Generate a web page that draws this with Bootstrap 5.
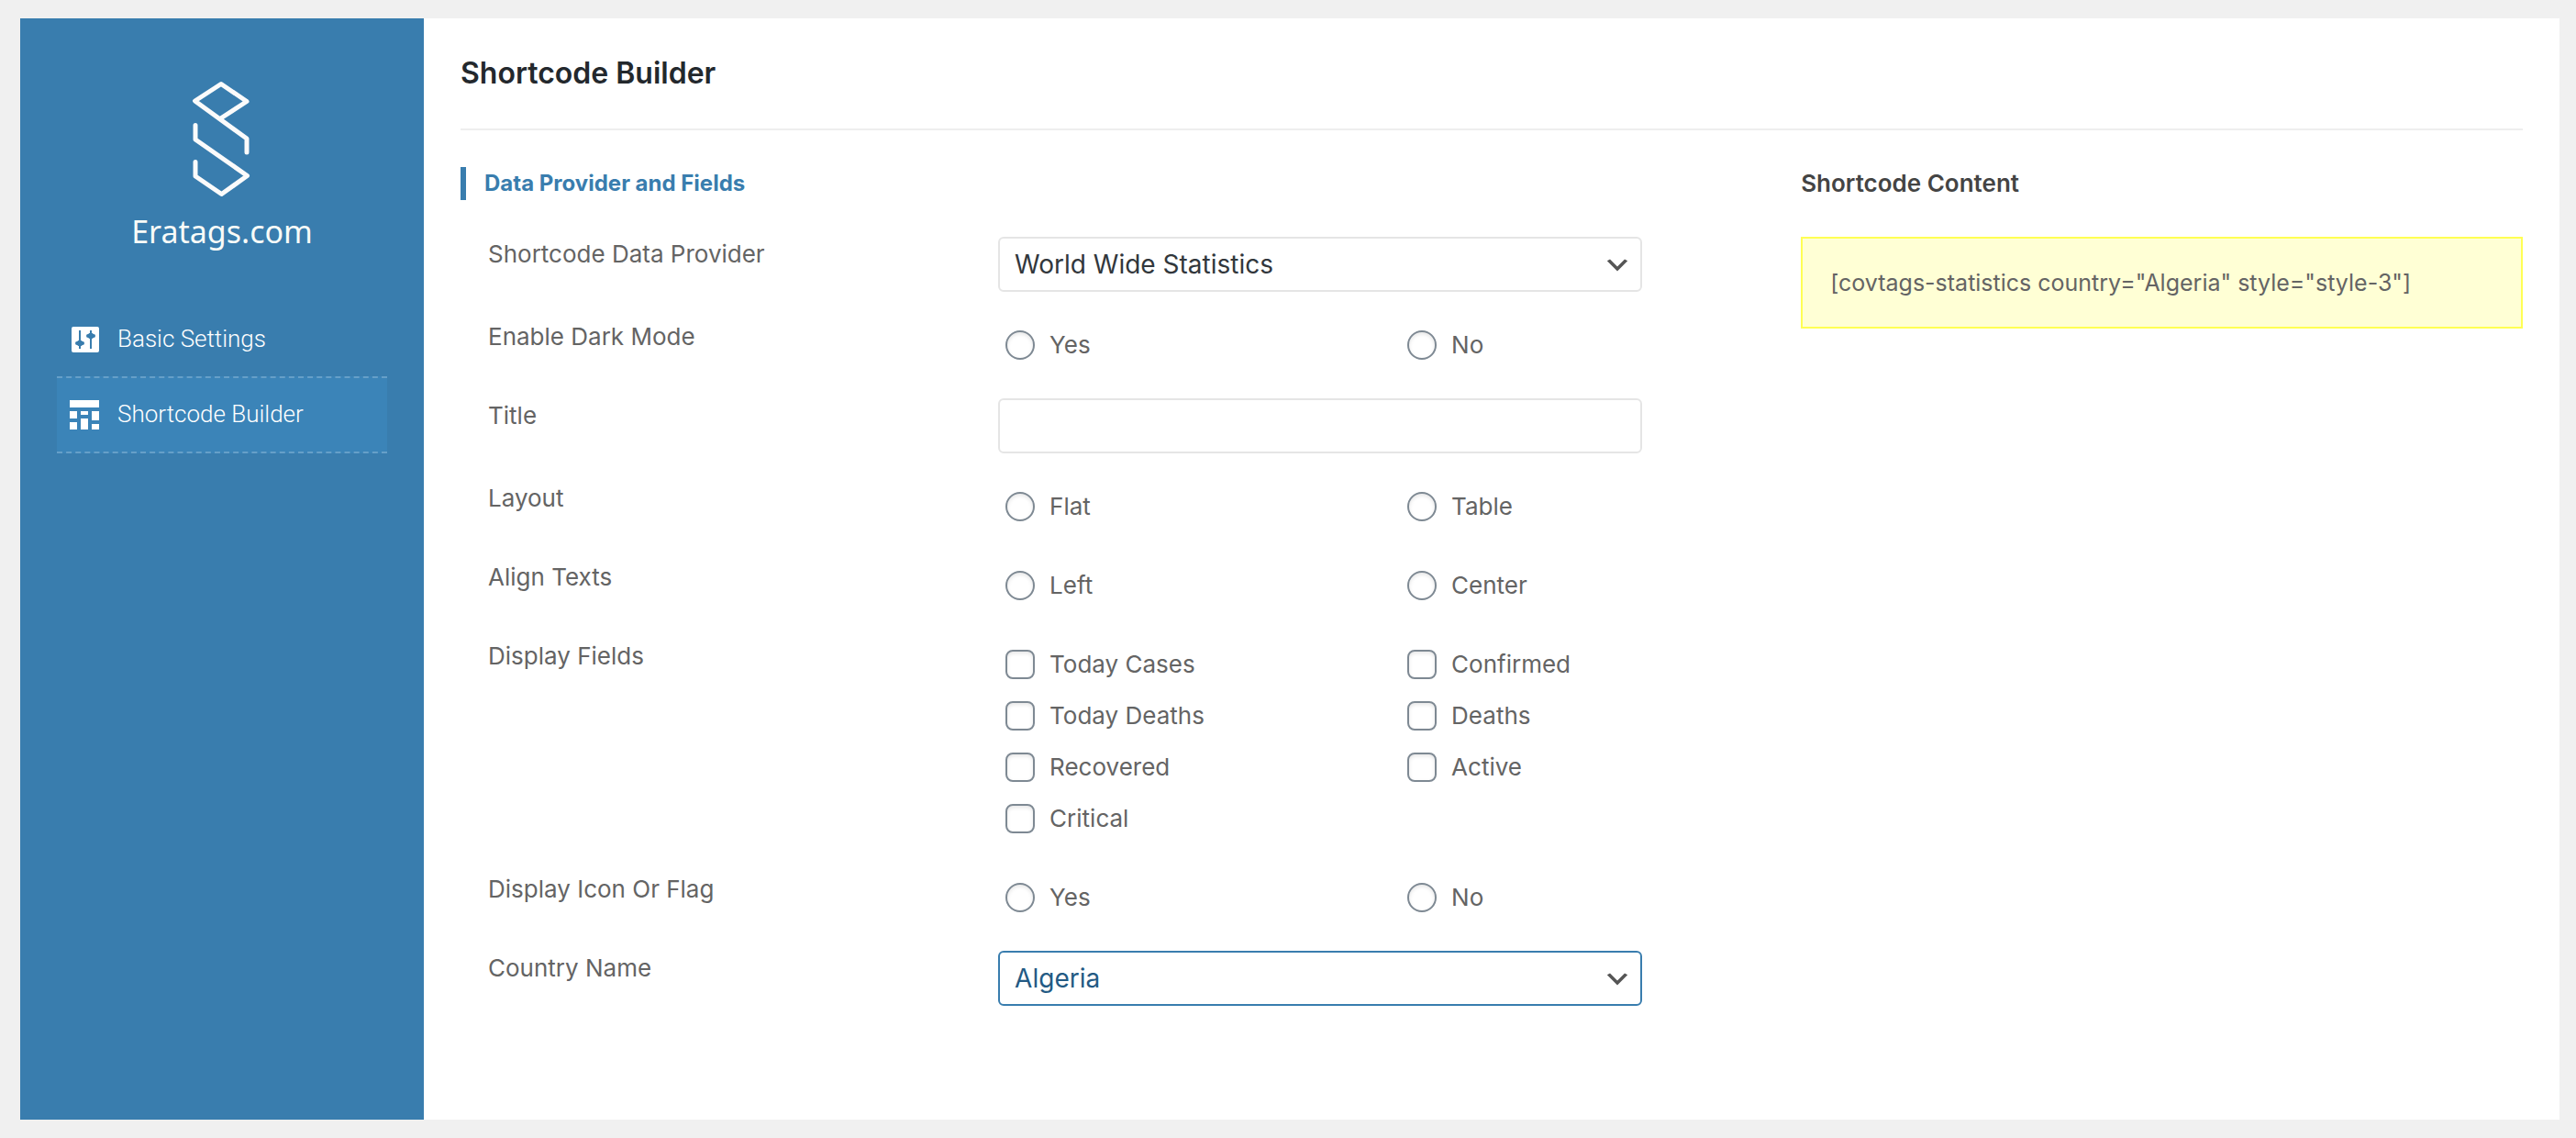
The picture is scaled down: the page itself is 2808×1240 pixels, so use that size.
<!DOCTYPE html>
<html lang="en">
<head>
<meta charset="utf-8">
<meta name="viewport" content="width=device-width, initial-scale=1">
<title>Shortcode Builder</title>
<link href="https://cdn.jsdelivr.net/npm/bootstrap@5.3.0/dist/css/bootstrap.min.css" rel="stylesheet">
<style>
  body { background: #f0f0f0; color: #646464; font-family: Inter, "Liberation Sans", sans-serif; font-size: 26px; line-height: 36px; }
  .app-shell { margin: 20px 18px 20px 22px; min-height: calc(100vh - 40px); background: #fff; }
  .side-panel { flex: 0 0 440px; background: #397dae; padding: 66px 40px 40px; color: #fff; }
  .brand-name { font-family: "Noto Sans", sans-serif; font-size: 34px; line-height: 48px; margin-top: 10px; color: #f8fbf8; }
  .side-menu { margin-top: 54px; font-family: Roboto, sans-serif; font-weight: 300; font-size: 26px; line-height: 36px; }
  .side-link { color: #fff; height: 80px; padding: 0 14px; gap: 20px; text-decoration: none; }
  .side-link span { padding-bottom: 2px; }
  .side-link.current { height: 84px; background: #3b84b8; border-top: 2px dashed #669fc8; border-bottom: 2px dashed #669fc8; }
  .main-panel { padding: 40px; min-width: 0; }
  .page-title { font-size: 32px; line-height: 40px; font-weight: 600; color: #23282d; padding-bottom: 40px; margin-bottom: 40px; border-bottom: 2px solid #eee; }
  .builder-col { flex: 0 0 65%; }
  .section-title { font-size: 24px; line-height: 36px; font-weight: 700; color: #397dae; border-left: 6px solid #397dae; padding-left: 20px; margin-bottom: 40px; }
  .output-title { font-size: 26px; line-height: 36px; font-weight: 600; color: #444; margin-bottom: 40px; }
  .builder-form { padding: 0 173px 0 30px; gap: 30px; }
  .field-name { flex: 0 0 44.2%; line-height: 38px; font-size: 26px; font-weight: 400; }
  .field-box, .field-box:focus { height: 60px; border: 2px solid #e5e5e5; border-radius: 6px; padding: 0 48px 0 16px; font-size: 28px; line-height: 56px; color: #32373c; background-color: #fff; box-shadow: none; }
  select.field-box { background-image: url("data:image/svg+xml,%3Csvg xmlns='http://www.w3.org/2000/svg' viewBox='0 0 20 20'%3E%3Cpath d='M5 6l5 5 5-5 2 1-7 7-7-7 2-1z' fill='%23555'/%3E%3C/svg%3E"); background-size: 32px 32px; background-position: right 9px top 55%; }
  .field-box.active-box { border-color: #397dae; color: #235a84; }
  .option-grid { display: grid; grid-template-columns: 438px 1fr; padding-left: 8px; }
  .option-item { height: 56px; gap: 16px; }
  .option-item .form-check-input { width: 32px; height: 32px; margin: 0; border: 2px solid #7e8993; box-shadow: inset 0 2px 4px rgba(0,0,0,.1); }
  .option-item .form-check-input[type=checkbox] { border-radius: 8px; }
  .code-output { background: #ffffd5; border: 2px solid #ffff54; padding: 30px; font-size: 25px; }
</style>
</head>
<body>
<div class="app-shell d-flex">
  <aside class="side-panel">
    <div class="d-flex flex-column align-items-center">
      <svg width="66" height="132" viewBox="209 86 66 132" fill="none" stroke="#fbfbfb" stroke-width="5" stroke-linecap="round" stroke-linejoin="round" aria-hidden="true">
        <path d="M240.500 129L269 110.500L241 91.500L212.500 110L269 151V166"/>
        <path d="M213 136.500V152L269.500 191.500L241.500 211.500L213 192V176.500"/>
      </svg>
      <div class="brand-name">Eratags.com</div>
    </div>
    <nav class="side-menu d-flex flex-column">
      <a href="#" class="side-link d-flex align-items-center">
        <svg width="32" height="32" viewBox="0 0 32 32" aria-hidden="true">
          <rect x="2" y="2" width="30" height="28" rx="2" fill="#fff"/>
          <g fill="#397dae"><rect x="10" y="6" width="2" height="20"/><rect x="6" y="18" width="10" height="4" rx="2"/><rect x="8.500" y="17" width="5" height="6" rx="1"/><rect x="22" y="6" width="2" height="20"/><rect x="18" y="10" width="10" height="4" rx="2"/><rect x="20.500" y="9" width="5" height="6" rx="1"/></g>
        </svg>
        <span>Basic Settings</span>
      </a>
      <a href="#" class="side-link current d-flex align-items-center" aria-current="page">
        <svg width="32" height="32" viewBox="0 0 32 32" fill="#fff" aria-hidden="true">
          <path d="M0 0h32v8H0zM0 12h8v8H0zM12 12h8v4h-8zM24 12h8v10h-8zM0 24h8v8H0zM12 20h8v12h-8zM24 26h8v6h-8z"/>
        </svg>
        <span>Shortcode Builder</span>
      </a>
    </nav>
  </aside>

  <main class="main-panel flex-grow-1">
    <h1 class="page-title mt-0">Shortcode Builder</h1>
    <div class="d-flex">
      <section class="builder-col">
        <h2 class="section-title">Data Provider and Fields</h2>
        <form class="builder-form d-flex flex-column">
          <div class="d-flex">
            <label class="field-name" for="provider">Shortcode Data Provider</label>
            <select class="form-select field-box" id="provider"><option selected>World Wide Statistics</option></select>
          </div>
          <div class="d-flex" role="radiogroup" aria-labelledby="dark-name">
            <div class="field-name" id="dark-name">Enable Dark Mode</div>
            <div class="option-grid flex-grow-1">
              <div class="option-item d-flex align-items-center"><input class="form-check-input" type="radio" name="dark" id="dark-yes"><label for="dark-yes">Yes</label></div>
              <div class="option-item d-flex align-items-center"><input class="form-check-input" type="radio" name="dark" id="dark-no"><label for="dark-no">No</label></div>
            </div>
          </div>
          <div class="d-flex">
            <label class="field-name" for="title-box">Title</label>
            <input class="form-control field-box" type="text" id="title-box">
          </div>
          <div class="d-flex" role="radiogroup" aria-labelledby="layout-name">
            <div class="field-name" id="layout-name">Layout</div>
            <div class="option-grid flex-grow-1">
              <div class="option-item d-flex align-items-center"><input class="form-check-input" type="radio" name="layout" id="layout-flat"><label for="layout-flat">Flat</label></div>
              <div class="option-item d-flex align-items-center"><input class="form-check-input" type="radio" name="layout" id="layout-table"><label for="layout-table">Table</label></div>
            </div>
          </div>
          <div class="d-flex" role="radiogroup" aria-labelledby="align-name">
            <div class="field-name" id="align-name">Align Texts</div>
            <div class="option-grid flex-grow-1">
              <div class="option-item d-flex align-items-center"><input class="form-check-input" type="radio" name="align" id="align-left"><label for="align-left">Left</label></div>
              <div class="option-item d-flex align-items-center"><input class="form-check-input" type="radio" name="align" id="align-center"><label for="align-center">Center</label></div>
            </div>
          </div>
          <div class="d-flex" role="group" aria-labelledby="fields-name">
            <div class="field-name" id="fields-name">Display Fields</div>
            <div class="option-grid flex-grow-1">
              <div class="option-item d-flex align-items-center"><input class="form-check-input" type="checkbox" id="f-today-cases"><label for="f-today-cases">Today Cases</label></div>
              <div class="option-item d-flex align-items-center"><input class="form-check-input" type="checkbox" id="f-confirmed"><label for="f-confirmed">Confirmed</label></div>
              <div class="option-item d-flex align-items-center"><input class="form-check-input" type="checkbox" id="f-today-deaths"><label for="f-today-deaths">Today Deaths</label></div>
              <div class="option-item d-flex align-items-center"><input class="form-check-input" type="checkbox" id="f-deaths"><label for="f-deaths">Deaths</label></div>
              <div class="option-item d-flex align-items-center"><input class="form-check-input" type="checkbox" id="f-recovered"><label for="f-recovered">Recovered</label></div>
              <div class="option-item d-flex align-items-center"><input class="form-check-input" type="checkbox" id="f-active"><label for="f-active">Active</label></div>
              <div class="option-item d-flex align-items-center"><input class="form-check-input" type="checkbox" id="f-critical"><label for="f-critical">Critical</label></div>
            </div>
          </div>
          <div class="d-flex" role="radiogroup" aria-labelledby="icon-name">
            <div class="field-name" id="icon-name">Display Icon Or Flag</div>
            <div class="option-grid flex-grow-1">
              <div class="option-item d-flex align-items-center"><input class="form-check-input" type="radio" name="icon" id="icon-yes"><label for="icon-yes">Yes</label></div>
              <div class="option-item d-flex align-items-center"><input class="form-check-input" type="radio" name="icon" id="icon-no"><label for="icon-no">No</label></div>
            </div>
          </div>
          <div class="d-flex">
            <label class="field-name" for="country">Country Name</label>
            <select class="form-select field-box active-box" id="country"><option selected>Algeria</option></select>
          </div>
        </form>
      </section>
      <section class="flex-grow-1">
        <h2 class="output-title">Shortcode Content</h2>
        <div class="code-output">[covtags-statistics country="Algeria" style="style-3"]</div>
      </section>
    </div>
  </main>
</div>
<script src="https://cdn.jsdelivr.net/npm/bootstrap@5.3.0/dist/js/bootstrap.bundle.min.js"></script>
</body>
</html>
